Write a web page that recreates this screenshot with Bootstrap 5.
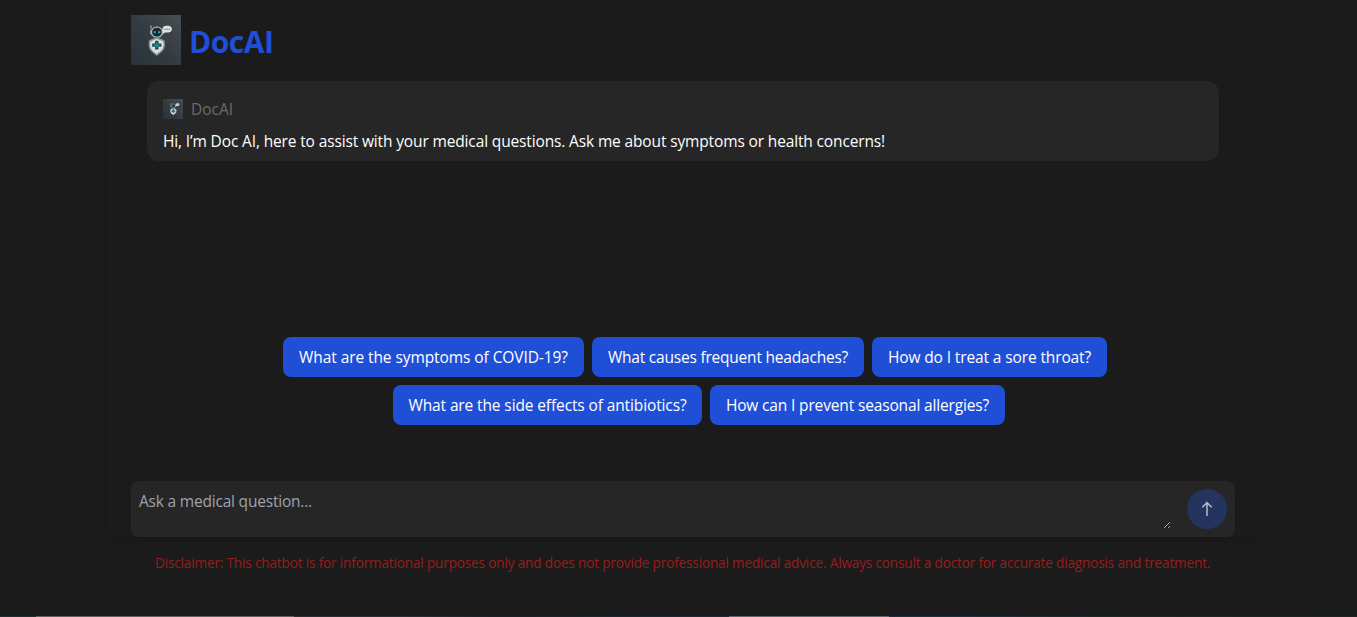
<!DOCTYPE html>
<html lang="en" data-bs-theme="dark">
<head>
<meta charset="utf-8">
<meta name="viewport" content="width=device-width, initial-scale=1">
<title>DocAI</title>
<link href="https://cdn.jsdelivr.net/npm/bootstrap@5.3.0/dist/css/bootstrap.min.css" rel="stylesheet">
<style>
body{background:#1b1b1b;font-family:"Open Sans","Noto Sans",sans-serif;font-size:15.5px;line-height:24px;height:100vh;overflow:hidden;letter-spacing:-.14px}
.shell{width:1152px;height:537px;margin-left:107px;padding:15px 24px 0;border-radius:0 0 8px 8px;box-shadow:0 4px 6px -1px rgba(0,0,0,.1),0 2px 4px -2px rgba(0,0,0,.1)}
.brand{font-size:30px;line-height:36px;color:#1f4fd6;letter-spacing:-.5px;margin:4px 0 0 8px}
.bubble{background:#262626;border-radius:12px;height:80px;margin:16px 16px 0;padding:16px}
.author{color:#666b70;letter-spacing:0;margin-left:8px}
.message{color:#fff;margin-top:8px;white-space:nowrap}
.prompts{height:88px;margin-top:176px}
.prompts .first-line{margin-left:24px}
.prompts .second-line{margin-left:32px}
.prompt{--bs-btn-bg:#1f4fd6;--bs-btn-color:#fff;--bs-btn-font-size:15.5px;height:40px;border-radius:8px;border:0;padding:0;line-height:24px;white-space:nowrap}
.p-covid{width:301px;letter-spacing:-.08px}
.p-headache{width:272px;letter-spacing:-.21px}
.p-throat{width:235px;letter-spacing:-.12px}
.p-antibiotics{width:309px;letter-spacing:-.12px}
.p-allergies{width:295px;letter-spacing:-.15px}
.composer{background:#262626;height:56px;border-radius:8px;margin-top:56px;padding:8px}
.question,.question:focus{background:transparent;border:0;color:#fff;height:40px;width:1032px;min-height:0;padding:0;font-size:15.5px;line-height:24px;resize:both;overflow:hidden;letter-spacing:-.2px;border-radius:0}
.question::placeholder{color:#9ca3af;opacity:1}
.send{--bs-btn-disabled-bg:#24345f;--bs-btn-disabled-opacity:1;width:40px;height:40px;border:0}
.disclaimer{color:#991b1b;font-size:13.6px;line-height:20px;letter-spacing:-.17px;margin:16px 0 0 155px;white-space:nowrap}
.edge{height:1px;background:linear-gradient(90deg,#1d3030 36px,#606060 36px 294px,#292f33 294px 400px,#192225 500px,#1c2c38 729px,#59666b 729px 889px,#1b303e 889px 960px,#1c2822 1120px,#202420)}
</style>
</head>
<body class="d-flex flex-column">
<svg width="0" height="0" class="position-absolute" aria-hidden="true">
  <defs>
    <linearGradient id="slate" x1="1" y1="0" x2="0" y2="1"><stop stop-color="#484e51"/><stop offset=".5" stop-color="#343b42"/><stop offset="1" stop-color="#29323b"/></linearGradient>
    <symbol id="robot" viewBox="0 0 50 50">
      <path fill="url(#slate)" d="M0 0h50v50H0z"/>
      <path d="M20 11.5v5.5" stroke="#8d9899" stroke-width="1"/>
      <circle cx="20" cy="11.5" r=".8" fill="#a7b0b0"/>
      <rect x="19.2" y="15.5" width="2" height="4" rx="1" fill="#a8b0b0"/>
      <rect x="30.4" y="15.5" width="2" height="4" rx="1" fill="#a8b0b0"/>
      <rect x="20.5" y="12.2" width="10.8" height="10" rx="4.8" fill="#182a31" stroke="#a9b1b1" stroke-width="1.3"/>
      <path d="M31.9 17c-.9-1.3-.7-3.6.2-4.8 1.3-1.7 6.5-1.8 8-.2 1.4 1.6.9 4.2-.9 5-1.4.7-4 .6-5 .5l-2.8 1.4z" fill="#dce0df"/>
      <path d="M33.5 14.2h1.1m1 0h1.1m1 0h1.1" stroke="#48545a" stroke-width="1.1"/>
      <path d="M22.7 17.3h2m2.5 0h2" stroke="#18b9bd" stroke-width="2"/>
      <path d="M25.8 23c2 1 4.3 1.3 7.1 3 .6 2.4.5 4.9-.4 7.4-1.1 2.9-4.2 4.5-6.7 6.4-2.5-1.9-5.6-3.5-6.7-6.4-.9-2.5-1-5-.4-7.4 2.8-1.7 5.1-2 7.1-3z" fill="#dce1df" stroke="#899395" stroke-width="1.5"/>
      <path d="M24.1 25.8h3.4v2.7h2.9v3.3h-2.9v2.8h-3.4v-2.8h-2.9v-3.3h2.9z" fill="#174b54"/>
      <path d="M25.8 27.5v5.4m-2.7-2.7h5.4" stroke="#22aaa8" stroke-width="1"/>
    </symbol>
  </defs>
</svg>
<main class="shell flex-shrink-0">
  <header class="d-flex align-items-center">
    <svg width="50" height="50" role="img" aria-label="DocAI logo"><use href="#robot"/></svg>
    <h1 class="brand fw-bold">DocAI</h1>
  </header>
  <section class="bubble">
    <div class="d-flex align-items-center">
      <svg width="20" height="20" aria-hidden="true"><use href="#robot"/></svg>
      <span class="author">DocAI</span>
    </div>
    <p class="message mb-0">Hi, I’m Doc AI, here to assist with your medical questions. Ask me about symptoms or health concerns!</p>
  </section>
  <section class="prompts d-flex flex-column gap-2">
    <div class="first-line d-flex justify-content-center gap-2">
      <button class="btn prompt p-covid">What are the symptoms of COVID-19?</button>
      <button class="btn prompt p-headache">What causes frequent headaches?</button>
      <button class="btn prompt p-throat">How do I treat a sore throat?</button>
    </div>
    <div class="second-line d-flex justify-content-center gap-2">
      <button class="btn prompt p-antibiotics">What are the side effects of antibiotics?</button>
      <button class="btn prompt p-allergies">How can I prevent seasonal allergies?</button>
    </div>
  </section>
  <form class="composer d-flex justify-content-between">
    <textarea class="form-control question" placeholder="Ask a medical question..."></textarea>
    <button class="btn send rounded-circle d-flex align-items-center justify-content-center p-0" disabled aria-label="Send">
      <svg width="14" height="16" viewBox="0 0 14 16" fill="none" stroke="#b4bac9" stroke-width="1.5"><path d="M7 15V1.7M2.3 6.2 7 1.6l4.7 4.6"/></svg>
    </button>
  </form>
</main>
<p class="disclaimer mb-0">Disclaimer: This chatbot is for informational purposes only and does not provide professional medical advice. Always consult a doctor for accurate diagnosis and treatment.</p>
<div class="edge mt-auto"></div>
<script src="https://cdn.jsdelivr.net/npm/bootstrap@5.3.0/dist/js/bootstrap.bundle.min.js"></script>
</body>
</html>
